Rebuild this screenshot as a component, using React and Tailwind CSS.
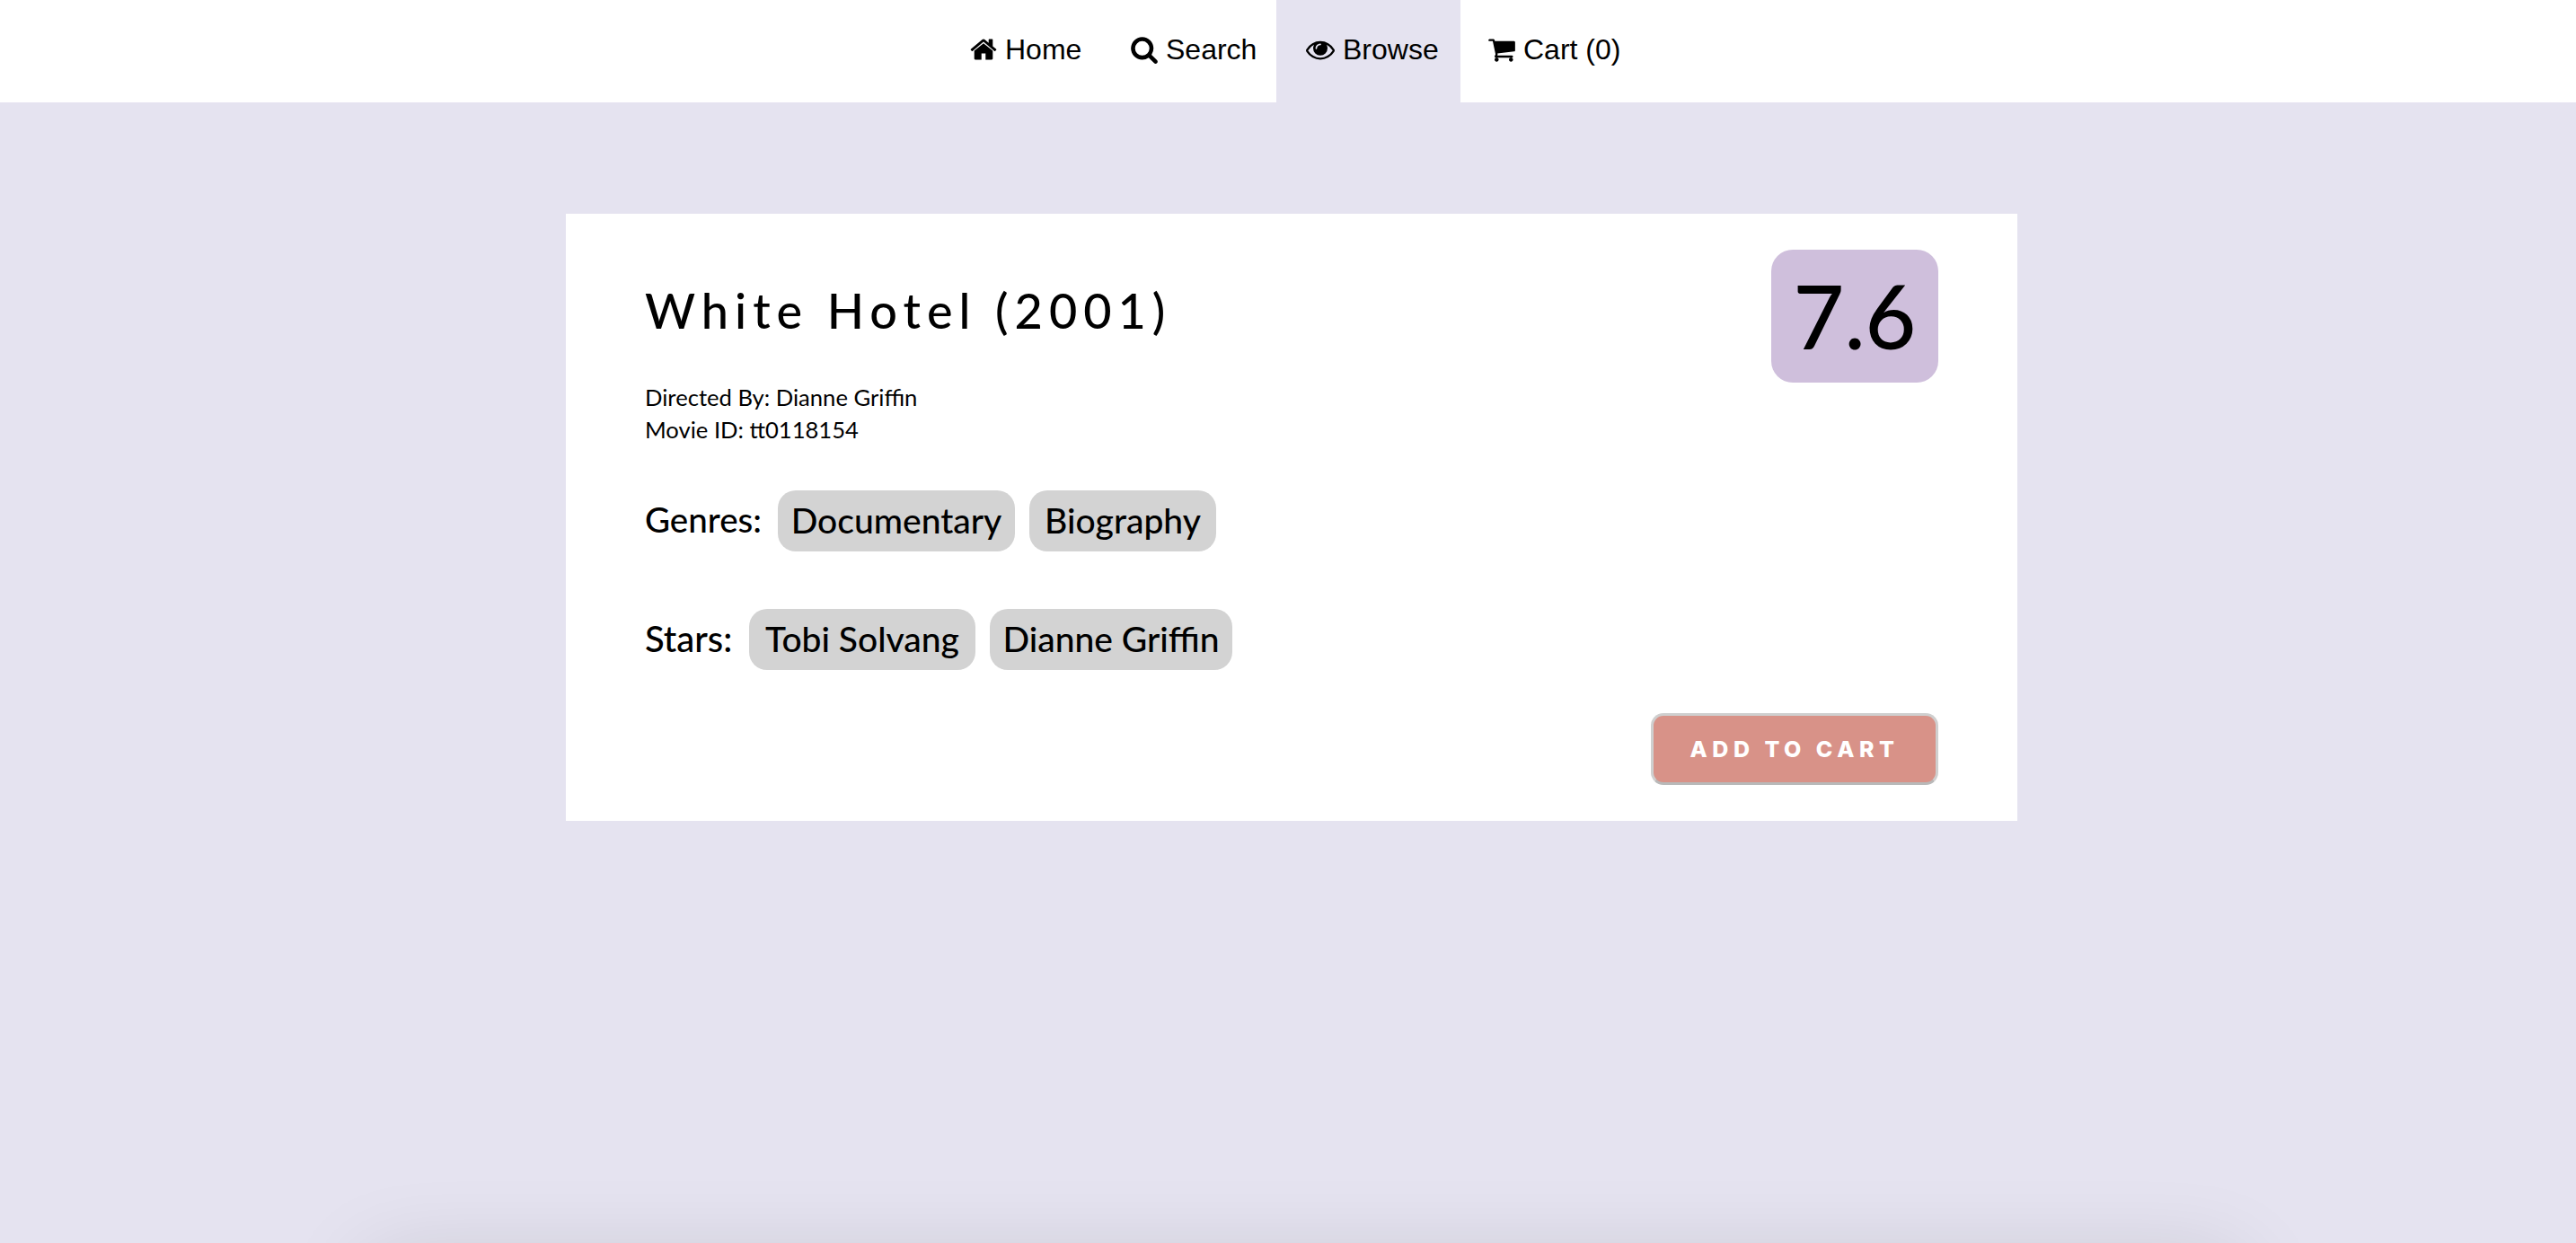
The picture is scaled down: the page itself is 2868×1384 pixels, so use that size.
import React from "react";

const paths = {
  home: "M1472 992v480q0 26-19 45t-45 19h-384v-384h-256v384h-384q-26 0-45-19t-19-45v-480q0-1 .5-3t.5-3l575-474 575 474q1 2 1 6zm223-69l-62 74q-8 9-21 11h-3q-13 0-21-7l-692-577-692 577q-12 8-24 7-13-2-21-11l-62-74q-8-10-7-23.500t11-21.500l719-599q32-26 76-26t76 26l244 204v-195q0-14 9-23t23-9h192q14 0 23 9t9 23v408l219 182q10 8 11 21.500t-7 23.500z",
  search: "M1216 832q0-185-131.500-316.500t-316.500-131.500-316.500 131.500-131.500 316.500 131.500 316.500 316.500 131.500 316.500-131.500 131.500-316.500zm512 832q0 52-38 90t-90 38q-54 0-90-38l-343-342q-179 124-399 124-143 0-273.500-55.500t-225-150-150-225-55.500-273.500 55.500-273.500 150-225 225-150 273.500-55.500 273.500 55.500 225 150 150 225 55.500 273.500q0 220-124 399l343 343q37 37 37 90z",
  eye: "M1664 960q-152-236-381-353 61 104 61 225 0 185-131.500 316.500t-316.500 131.500-316.500-131.500-131.500-316.500q0-121 61-225-229 117-381 353 133 205 333.500 326.500t434.500 121.500 434.500-121.500 333.500-326.500zm-720-384q0-20-14-34t-34-14q-125 0-214.500 89.500t-89.500 214.500q0 20 14 34t34 14 34-14 14-34q0-86 61-147t147-61q20 0 34-14t14-34zm848 384q0 34-20 69-140 230-376.500 368.500t-499.500 138.500-499.500-139-376.500-368q-20-35-20-69t20-69q140-229 376.500-368t499.500-139 499.500 139 376.500 368q20 35 20 69z",
  cart: "M704 1536q0 52-38 90t-90 38-90-38-38-90 38-90 90-38 90 38 38 90zm896 0q0 52-38 90t-90 38-90-38-38-90 38-90 90-38 90 38 38 90zm128-1088v512q0 24-16.500 42.500t-40.500 21.500l-1044 122q13 60 13 70 0 16-24 64h920q26 0 45 19t19 45-19 45-45 19h-1024q-26 0-45-19t-19-45q0-11 8-31.500t16-36 21.500-40 15.500-29.500l-177-823h-204q-26 0-45-19t-19-45 19-45 45-19h256q16 0 28.500 6.500t19.500 15.500 13 24.500 8 26 5.500 29.500 4.500 26h1201q26 0 45 19t19 45z",
};

const nav = [
  { label: "Home", icon: "home", w: "w-[179px] pl-[31px] gap-[8px]" },
  { label: "Search", icon: "search", w: "w-[194px] pl-[31px] gap-[8px]" },
  { label: "Browse", icon: "eye", w: "w-[205px] pl-[33px] gap-[9px] bg-[#e5e3f0]" },
  { label: "Cart (0)", icon: "cart", w: "w-[200px] pl-[30px] gap-[8px]" },
];

function Chip({ w, children }) {
  return (
    <span className={`${w} h-[68px] flex items-center justify-center pb-[2px] bg-[#d3d3d3] rounded-[20px] text-[39px] font-medium`}>
      {children}
    </span>
  );
}

export default function App() {
  return (
    <div className="h-[1384px] overflow-hidden bg-[#e5e3f0] flex flex-col text-black">
      <nav className="h-[114px] shrink-0 bg-white flex justify-center pl-[6px] font-['Liberation_Sans',sans-serif] text-[32px]">
        {nav.map(({ label, icon, w }) => (
          <a key={label} className={`${w} h-full flex items-center pb-[4px]`}>
            <svg viewBox="0 0 1792 1792" fill="currentColor" className="w-[32px] h-[32px] shrink-0">
              <path d={paths[icon]} />
            </svg>
            <span>{label}</span>
          </a>
        ))}
      </nav>
      <main className="ml-[630px] mt-[124px] w-[1616px] h-[676px] shrink-0 bg-white px-[88px] pt-[40px] font-['Lato',sans-serif]">
        <div className="h-[268px] flex justify-between items-start">
          <div>
            <h1 className="mt-[33px] text-[54px] leading-[70px] tracking-[7px] font-medium">White Hotel (2001)</h1>
            <div className="mt-[43px] text-[25.6px] leading-[36px]">
              <div>Directed By: Dianne Griffin</div>
              <div>Movie ID: tt0118154</div>
            </div>
          </div>
          <div className="w-[186px] h-[148px] rounded-[24px] bg-[#cfbfdc] flex items-center justify-center pb-[3px] text-[98px] leading-none font-medium">7.6</div>
        </div>
        <div className="flex flex-col gap-[64px] font-medium">
          <div className="flex items-center gap-4">
            <span className="w-[132px] pb-[2px] whitespace-nowrap text-[38.5px]">Genres:</span>
            <Chip w="w-[264px]">Documentary</Chip>
            <Chip w="w-[208px]">Biography</Chip>
          </div>
          <div className="flex items-center gap-4">
            <span className="w-[100px] pb-[2px] whitespace-nowrap text-[40px]">Stars:</span>
            <Chip w="w-[252px]">Tobi Solvang</Chip>
            <Chip w="w-[270px]">Dianne Griffin</Chip>
          </div>
        </div>
        <div className="mt-[48px] flex justify-end">
          <button className="w-[320px] h-[80px] pt-[2px] rounded-[14px] border-[3px] border-[#cfcfcf] border-b-[#b9b9b9] bg-[#d89288] text-white font-['Inter',sans-serif] font-extrabold text-[25px] tracking-[5.5px]">ADD TO CART</button>
        </div>
      </main>
      <div className="ml-[412px] mt-[495px] w-[2078px] h-20 shrink-0 bg-white shadow-[0_0_100px_rgba(0,0,0,0.16)]"></div>
    </div>
  );
}
